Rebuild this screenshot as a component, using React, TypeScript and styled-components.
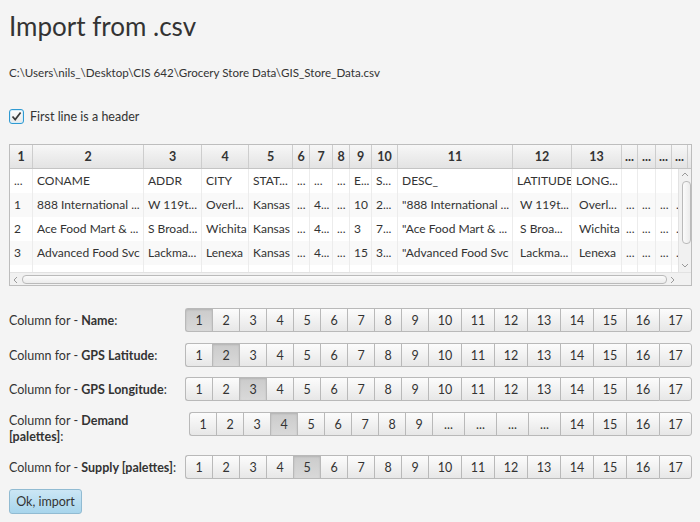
import styled, { createGlobalStyle, css } from "styled-components";

const GlobalStyle = createGlobalStyle`
  html, body {
    margin: 0;
    padding: 0;
    background: #f4f4f4;
  }
  body {
    font-family: Lato, "Open Sans", "Liberation Sans", sans-serif;
    font-size: 12.5px;
    color: #333;
  }
`;

const Page = styled.div`
  width: 700px;
  height: 522px;
  box-sizing: border-box;
  padding: 10px 8px 0 9px;
  display: flex;
  flex-direction: column;
  overflow: hidden;
`;

const Title = styled.h1`
  margin: 0;
  font-size: 26px;
  font-weight: 400;
  line-height: 32px;
  color: #333;
`;

const FilePath = styled.div`
  margin-top: 23px;
  line-height: 16px;
  font-size: 11.6px;
`;

const CheckRow = styled.label`
  margin-top: 27px;
  display: flex;
  align-items: center;
  gap: 6px;
  height: 16px;
`;

const CheckBox = styled.span`
  width: 15px;
  height: 15px;
  box-sizing: border-box;
  border-radius: 3px;
  border: 1px solid #2f9ad2;
  box-shadow: inset 0 0 0 1px #d6edf8;
  background: linear-gradient(#fdfdfd, #e9e9e9);
  display: flex;
  align-items: center;
  justify-content: center;
`;

const Table = styled.div`
  margin-top: 20px;
  height: 142px;
  box-sizing: border-box;
  border: 1px solid #bdbdbd;
  background: #fff;
  display: flex;
  flex-direction: column;
  overflow: hidden;
  font-size: 12px;
`;

const HeaderRow = styled.div`
  display: flex;
  height: 24px;
  flex-shrink: 0;
  box-sizing: border-box;
  border-bottom: 1px solid #c4c4c4;
  background: linear-gradient(#f7f7f7, #e3e3e3);
`;

const HeaderCell = styled.div<{ $w: number }>`
  width: ${(p) => p.$w}px;
  flex-shrink: 0;
  box-sizing: border-box;
  border-right: 1px solid #cdcdcd;
  font-weight: 700;
  font-size: 12.5px;
  text-align: center;
  line-height: 23px;
  overflow: hidden;
  white-space: nowrap;
`;

const Body = styled.div`
  display: flex;
  height: 103px;
  flex-shrink: 0;
`;

const Viewport = styled.div`
  flex: 1;
  overflow: hidden;
`;

const DataRow = styled.div<{ $odd: boolean }>`
  display: flex;
  height: 24px;
  background: ${(p) => (p.$odd ? "#f9f9f9" : "#fff")};
`;

const DataCell = styled.div<{ $w: number }>`
  width: ${(p) => p.$w}px;
  flex-shrink: 0;
  box-sizing: border-box;
  border-right: 1px solid #ececec;
  padding: 0 3px 0 4px;
  line-height: 24px;
  white-space: pre;
  overflow: hidden;
`;

const VScroll = styled.div`
  width: 12px;
  flex-shrink: 0;
  background: #f1f1f1;
  border-left: 1px solid #e2e2e2;
  display: flex;
  flex-direction: column;
  align-items: center;
`;

const Arrow = styled.div`
  width: 12px;
  height: 12px;
  display: flex;
  align-items: center;
  justify-content: center;
  flex-shrink: 0;
`;

const VThumb = styled.div`
  width: 9px;
  height: 63px;
  margin-left: 2px;
  box-sizing: border-box;
  border: 1px solid #bababa;
  border-radius: 4px;
  background: linear-gradient(90deg, #fbfbfb, #ececec);
`;

const VTrack = styled.div`
  flex: 1;
  width: 100%;
`;

const HScrollRow = styled.div`
  display: flex;
  height: 13px;
  flex-shrink: 0;
  background: #f1f1f1;
  border-top: 1px solid #e2e2e2;
`;

const HScroll = styled.div`
  flex: 1;
  display: flex;
  align-items: center;
`;

const HThumb = styled.div`
  flex: 1;
  height: 9px;
  box-sizing: border-box;
  border: 1px solid #bababa;
  border-radius: 4px;
  background: linear-gradient(#fbfbfb, #ececec);
`;

const Corner = styled.div`
  width: 12px;
  background: #f1f1f1;
`;

const FormRow = styled.div<{ $top?: boolean; $gap: number }>`
  display: flex;
  align-items: ${(p) => (p.$top ? "flex-start" : "center")};
  margin-top: ${(p) => p.$gap}px;
`;

const FieldLabel = styled.div`
  line-height: 16px;
  padding-top: 1px;
  white-space: nowrap;
  b {
    font-weight: 700;
  }
`;

const Segmented = styled.div`
  display: flex;
  margin-left: auto;
`;

const Toggle = styled.button<{ $w: number; $on: boolean }>`
  width: ${(p) => p.$w}px;
  height: 24px;
  box-sizing: border-box;
  margin: 0;
  padding: 0;
  font: inherit;
  color: #333;
  border: 1px solid #b9b9b9;
  border-right: none;
  background: linear-gradient(#fcfcfc, #e7e7e7);
  &:first-child {
    border-radius: 3px 0 0 3px;
  }
  &:last-child {
    border-right: 1px solid #b9b9b9;
    border-radius: 0 3px 3px 0;
  }
  ${(p) =>
    p.$on &&
    css`
      background: linear-gradient(#cbcbcb, #d9d9d9);
      box-shadow: inset 0 1px 2px rgba(0, 0, 0, 0.12);
    `}
`;

const OkButton = styled.button`
  margin-top: 10px;
  align-self: flex-start;
  width: 73px;
  height: 25px;
  box-sizing: border-box;
  padding: 0;
  font: inherit;
  color: #333;
  border: 1px solid #91bbd2;
  border-radius: 3px;
  background: linear-gradient(#cbe6f5, #a8d5ec);
`;

const widths = [23, 111, 58, 47, 44, 17, 23, 17, 22, 26, 115, 59, 50, 16, 18, 16, 16];
const headers = ["1", "2", "3", "4", "5", "6", "7", "8", "9", "10", "11", "12", "13", "...", "...", "...", "..."];

const rows: string[][] = [
  ["...", "CONAME", "ADDR", "CITY", "STAT...", "...", "...", "...", "E...", "S...", "DESC_", "LATITUDE", "LONG...", "", "", "", ""],
  ["1", "888 International ...", "W 119t...", "Overl...", "Kansas", "...", "4...", "...", "10", "2...", "\"888 International ...", " W 119t...", " Overl...", "...", "...", "...", "..."],
  ["2", "Ace Food Mart & ...", "S Broad...", "Wichita", "Kansas", "...", "4...", "...", "3", "7...", "\"Ace Food Mart & ...", " S Broa...", " Wichita", "...", "...", "...", "..."],
  ["3", "Advanced Food Svc", "Lackma...", "Lenexa", "Kansas", "...", "4...", "...", "15", "3...", "\"Advanced Food Svc", " Lackma...", " Lenexa", "...", "...", "...", "..."],
  ["", "", "", "", "", "", "", "", "", "", "", "", "", "", "", "", ""],
];

const allCols = Array.from({ length: 17 }, (_, i) => String(i + 1));
const demandCols = ["1", "2", "3", "4", "5", "6", "7", "8", "9", "...", "...", "...", "...", "14", "15", "16", "17"];

const btnWidth = (s: string) => (s === "..." ? 32 : s.length > 1 ? 33 : 27);

const Chevron = ({ dir }: { dir: "up" | "down" | "left" | "right" }) => {
  const d = {
    up: "M1 5 L4 2 L7 5",
    down: "M1 2 L4 5 L7 2",
    left: "M5 1 L2 4 L5 7",
    right: "M2 1 L5 4 L2 7",
  }[dir];
  return (
    <svg width="8" height="8" viewBox="0 0 8 8">
      <path d={d} fill="none" stroke="#9a9a9a" strokeWidth="1" />
    </svg>
  );
};

const fields: { label: React.ReactNode; cols: string[]; sel: number; gap: number; top?: boolean }[] = [
  { label: <>Column for - <b>Name</b>:</>, cols: allCols, sel: 0, gap: 22 },
  { label: <>Column for - <b>GPS Latitude</b>:</>, cols: allCols, sel: 1, gap: 11 },
  { label: <>Column for - <b>GPS Longitude</b>:</>, cols: allCols, sel: 2, gap: 10 },
  { label: <>Column for - <b>Demand</b><br /><b>[palettes]</b>:</>, cols: demandCols, sel: 3, gap: 11, top: true },
  { label: <>Column for - <b>Supply [palettes]</b>:</>, cols: allCols, sel: 4, gap: 10 },
];

export default function App() {
  return (
    <>
      <GlobalStyle />
      <Page>
        <Title>Import from .csv</Title>
        <FilePath>C:\Users\nils_\Desktop\CIS 642\Grocery Store Data\GIS_Store_Data.csv</FilePath>
        <CheckRow>
          <CheckBox>
            <svg width="11" height="11" viewBox="0 0 11 11">
              <path d="M1.5 5.5 L4.2 8.6 L9.6 1.6" fill="none" stroke="#3a3a3a" strokeWidth="1.7" />
            </svg>
          </CheckBox>
          First line is a header
        </CheckRow>

        <Table>
          <HeaderRow>
            {headers.map((h, i) => (
              <HeaderCell key={i} $w={widths[i]}>
                {h}
              </HeaderCell>
            ))}
          </HeaderRow>
          <Body>
            <Viewport>
              {rows.map((r, ri) => (
                <DataRow key={ri} $odd={ri % 2 === 1}>
                  {r.map((c, ci) => (
                    <DataCell key={ci} $w={widths[ci]}>
                      {c}
                    </DataCell>
                  ))}
                </DataRow>
              ))}
            </Viewport>
            <VScroll>
              <Arrow>
                <Chevron dir="up" />
              </Arrow>
              <VThumb />
              <VTrack />
              <Arrow>
                <Chevron dir="down" />
              </Arrow>
            </VScroll>
          </Body>
          <HScrollRow>
            <HScroll>
              <Arrow>
                <Chevron dir="left" />
              </Arrow>
              <HThumb />
              <Arrow>
                <Chevron dir="right" />
              </Arrow>
            </HScroll>
            <Corner />
          </HScrollRow>
        </Table>

        {fields.map((f, fi) => (
          <FormRow key={fi} $gap={f.gap} $top={f.top}>
            <FieldLabel>{f.label}</FieldLabel>
            <Segmented>
              {f.cols.map((c, ci) => (
                <Toggle key={ci} $w={btnWidth(c)} $on={ci === f.sel}>
                  {c}
                </Toggle>
              ))}
            </Segmented>
          </FormRow>
        ))}

        <OkButton>Ok, import</OkButton>
      </Page>
    </>
  );
}
